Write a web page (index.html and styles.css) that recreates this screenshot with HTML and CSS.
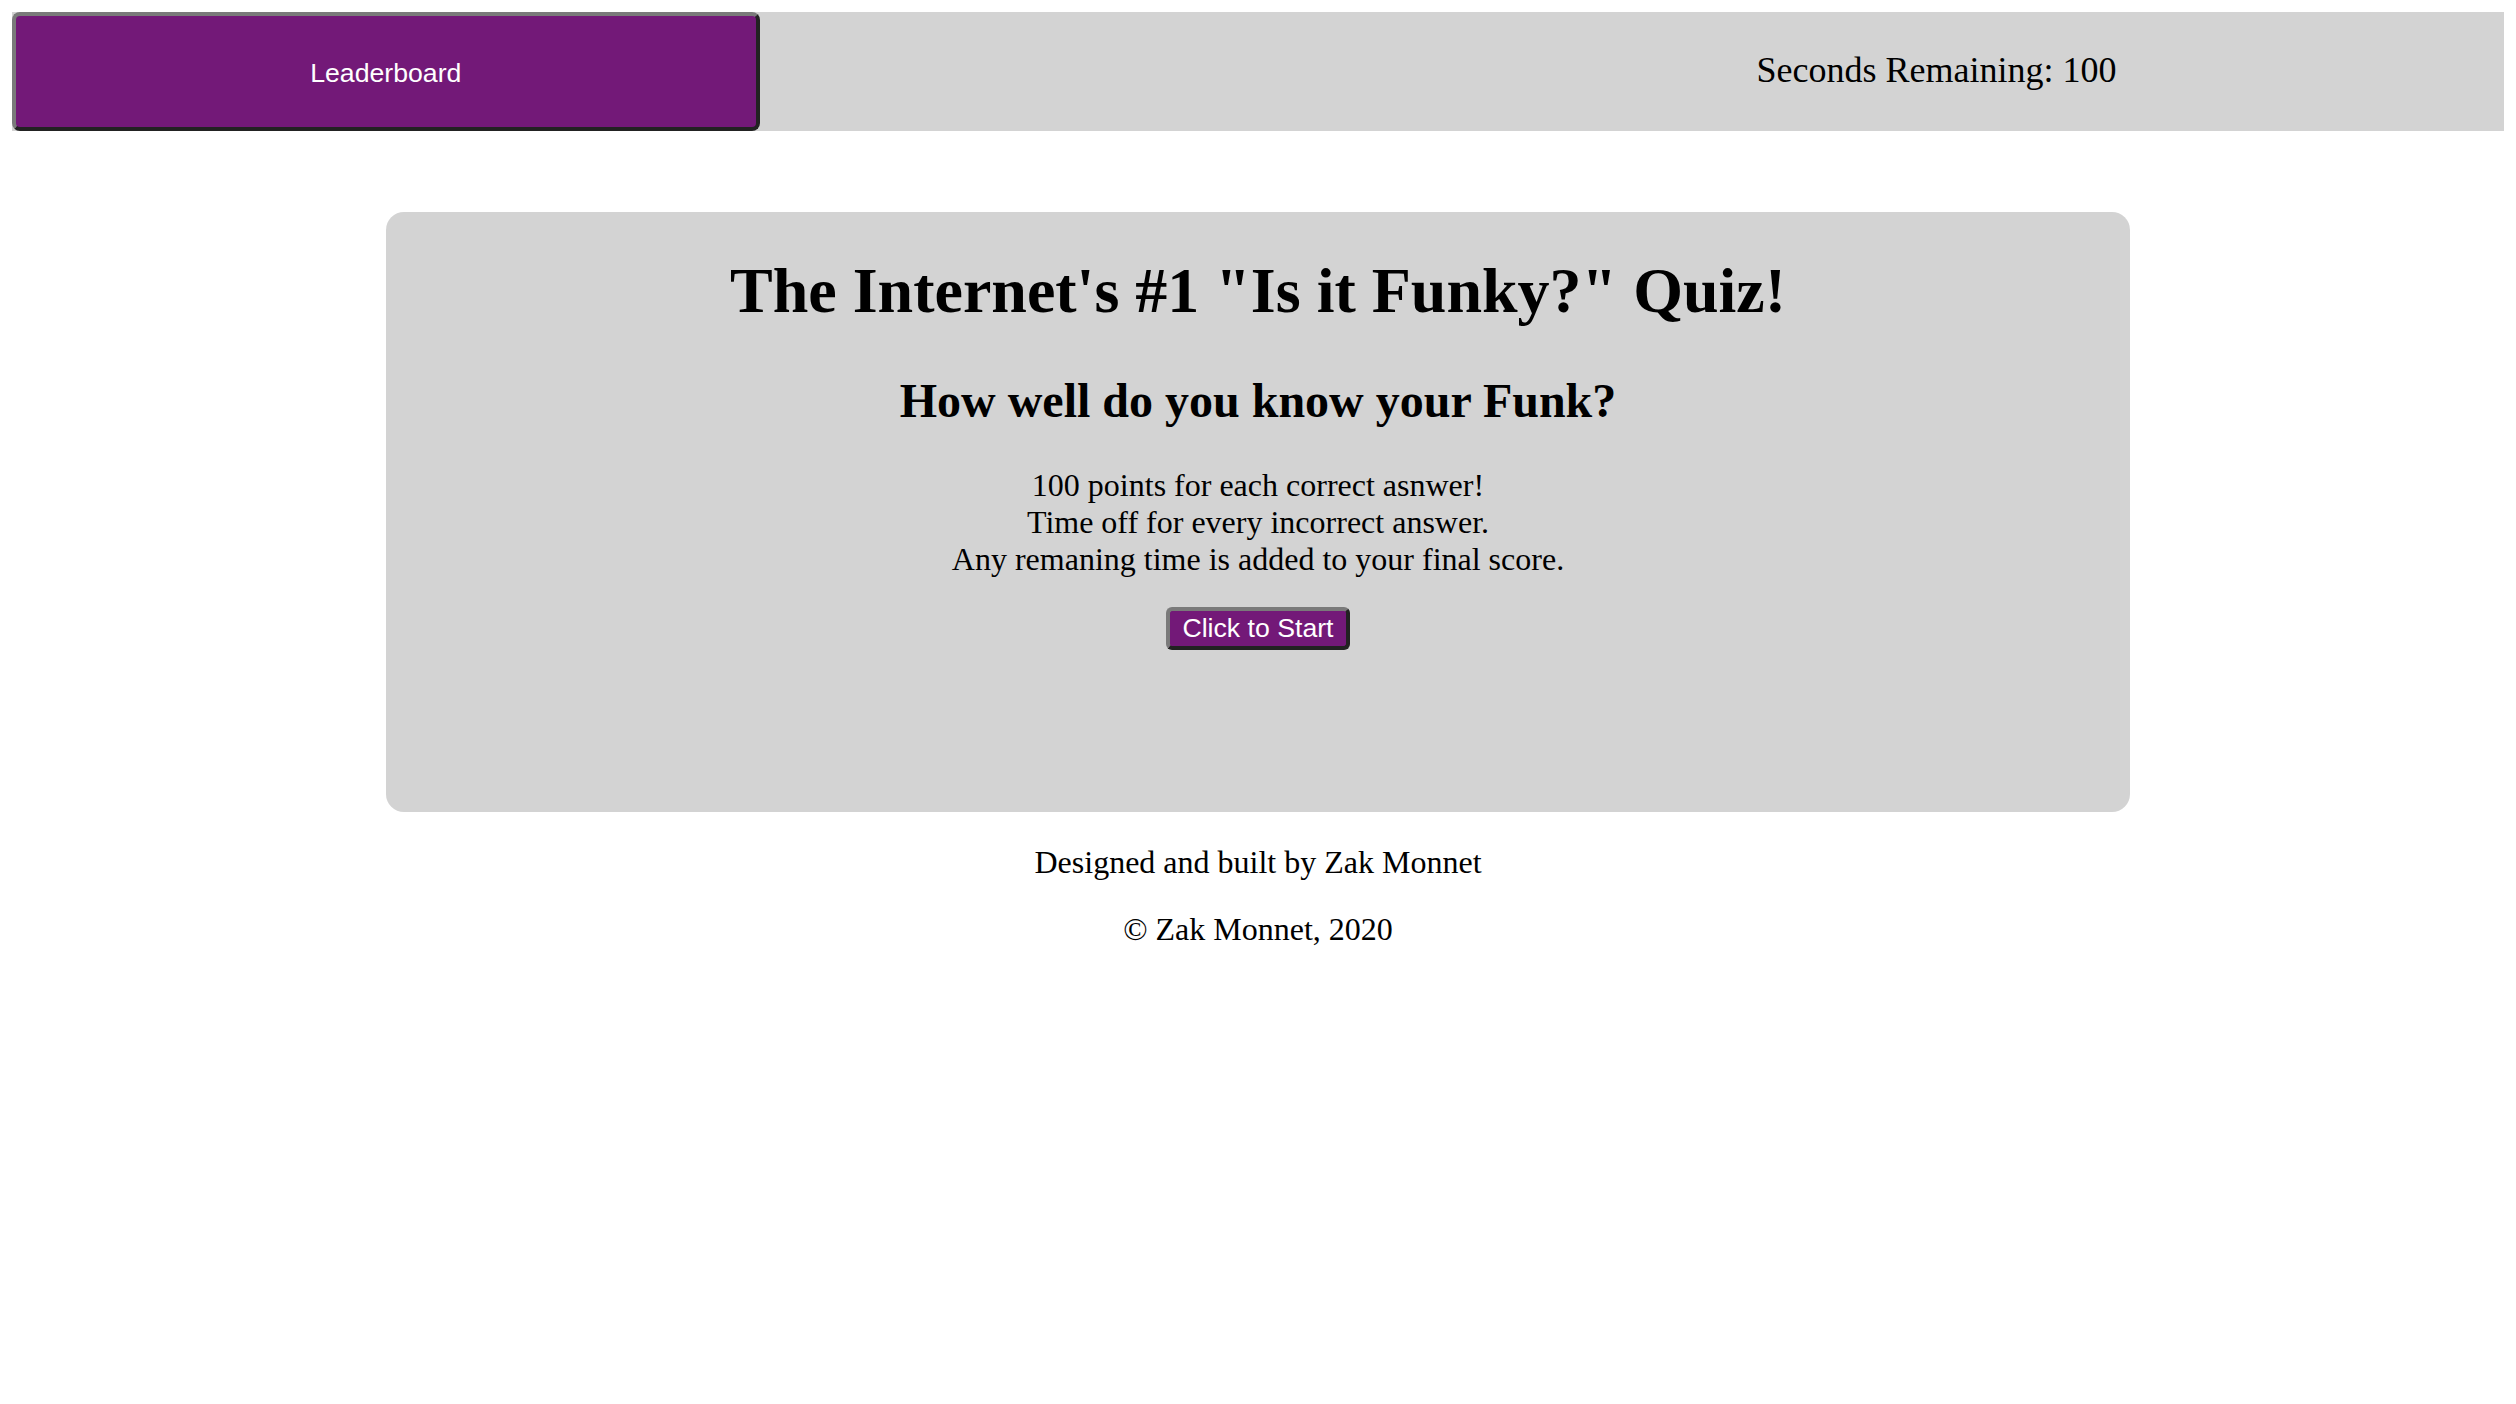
FILE: index.html
```html
<!DOCTYPE html>
<html lang="en">
<head>
<meta charset="utf-8">
<title>Is it Funky? Quiz</title>
<link rel="stylesheet" href="styles.css">
</head>
<body>
<header class="top-bar">
  <button class="btn leaderboard-btn">Leaderboard</button>
  <div class="timer">Seconds Remaining: 100</div>
</header>
<main class="quiz-card">
  <h1 class="quiz-title">The Internet's #1 "Is it Funky?" Quiz!</h1>
  <h2 class="quiz-subtitle">How well do you know your Funk?</h2>
  <p class="quiz-rules">100 points for each correct asnwer!<br>Time off for every incorrect answer.<br>Any remaning time is added to your final score.</p>
  <button class="btn start-btn">Click to Start</button>
</main>
<footer class="site-footer">
  <p class="credit">Designed and built by Zak Monnet</p>
  <p class="copyright">© Zak Monnet, 2020</p>
</footer>
</body>
</html>
```

FILE: styles.css
```css
html, body {
  background: #ffffff;
}

body {
  margin: 12px;
  font-family: "Liberation Serif", "Times New Roman", serif;
  font-size: 32px;
  color: #000;
}

.top-bar {
  display: flex;
  align-items: stretch;
  height: 119px;
  background: #d3d3d3;
}

.btn {
  font-family: "Liberation Sans", Arial, sans-serif;
  font-size: 26.67px;
  color: #ffffff;
  background: #731978;
  border-style: solid;
  border-width: 4px;
  border-color: #7a7a7a #222222 #222222 #7a7a7a;
  cursor: pointer;
}

.leaderboard-btn {
  width: 30%;
  border-radius: 8px;
  padding: 3px 0 0;
}

.timer {
  flex: 1;
  display: flex;
  align-items: center;
  padding-left: 997px;
  padding-bottom: 3px;
  font-size: 36px;
  white-space: nowrap;
}

.quiz-card {
  width: 70%;
  height: 600px;
  box-sizing: border-box;
  margin: 81px auto 0;
  padding: 42px 20px 0;
  background: #d3d3d3;
  border-radius: 18px;
  text-align: center;
}

.quiz-title {
  margin: 0;
  font-size: 64px;
  font-weight: bold;
}

.quiz-subtitle {
  margin: 45px 0 0;
  font-size: 48px;
  font-weight: bold;
}

.quiz-rules {
  margin: 39px 0 0;
}

.start-btn {
  margin-top: 29px;
  padding: 2px 12px;
  border-radius: 6px;
}

.site-footer {
  text-align: center;
}

.credit {
  margin: 32px 0 0;
}

.copyright {
  margin: 30px 0 0;
}
```
